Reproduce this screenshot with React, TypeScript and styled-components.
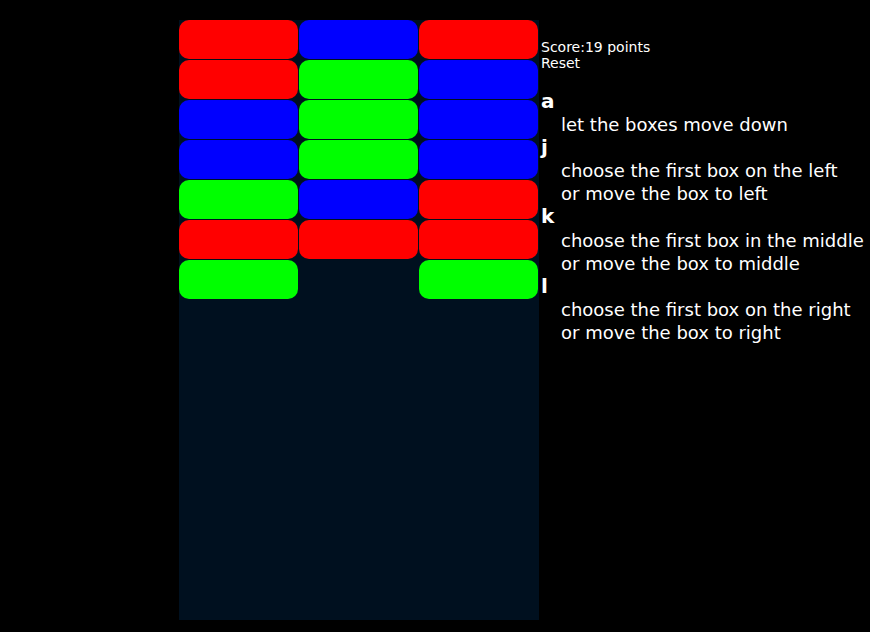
import styled, { createGlobalStyle } from 'styled-components';

type BoxColor = 'red' | 'green' | 'blue';

const GlobalStyle = createGlobalStyle`
  html, body {
    margin: 0;
    padding: 0;
    background: #000000;
  }
  body {
    font-family: "DejaVu Sans", Verdana, sans-serif;
    color: #ffffff;
  }
`;

const colorMap: Record<BoxColor, string> = {
  red: '#ff0000',
  green: '#00ff00',
  blue: '#0000ff',
};

const columns: BoxColor[][] = [
  ['red', 'red', 'blue', 'blue', 'green', 'red', 'green'],
  ['blue', 'green', 'green', 'green', 'blue', 'red'],
  ['red', 'blue', 'blue', 'blue', 'red', 'red', 'green'],
];

const keys = [
  { key: 'a', lines: ['let the boxes move down'] },
  { key: 'j', lines: ['choose the first box on the left', 'or move the box to left'] },
  { key: 'k', lines: ['choose the first box in the middle', 'or move the box to middle'] },
  { key: 'l', lines: ['choose the first box on the right', 'or move the box to right'] },
];

const Page = styled.div`
  display: flex;
  flex-direction: row;
  align-items: flex-start;
  padding: 20px 0 0 179px;
`;

const Board = styled.div`
  display: flex;
  flex-direction: row;
  width: 360px;
  height: 600px;
  background: #00101f;
`;

const Column = styled.div`
  display: flex;
  flex-direction: column;
  width: 120px;
`;

const Box = styled.div<{ $color: BoxColor }>`
  width: 119px;
  height: 39px;
  margin-bottom: 1px;
  border-radius: 10px;
  background: ${(p) => colorMap[p.$color]};
`;

const Panel = styled.div`
  display: flex;
  flex-direction: column;
  padding: 19px 0 0 2px;
`;

const Info = styled.div`
  font-size: 14px;
  line-height: 16px;
`;

const KeyList = styled.dl`
  margin: 19px 0 0;
`;

const KeyName = styled.dt`
  font-size: 20px;
  font-weight: bold;
  line-height: 23.1px;
`;

const KeyText = styled.dd`
  margin: 0 0 0 20px;
  font-size: 18px;
  line-height: 23.1px;
`;

export default function App() {
  return (
    <>
      <GlobalStyle />
      <Page>
        <Board>
          {columns.map((col, i) => (
            <Column key={i}>
              {col.map((c, j) => (
                <Box key={j} $color={c} />
              ))}
            </Column>
          ))}
        </Board>
        <Panel>
          <Info>Score:19 points</Info>
          <Info>Reset</Info>
          <KeyList>
            {keys.map((k) => (
              <div key={k.key}>
                <KeyName>{k.key}</KeyName>
                <KeyText>
                  {k.lines.map((line) => (
                    <div key={line}>{line}</div>
                  ))}
                </KeyText>
              </div>
            ))}
          </KeyList>
        </Panel>
      </Page>
    </>
  );
}
